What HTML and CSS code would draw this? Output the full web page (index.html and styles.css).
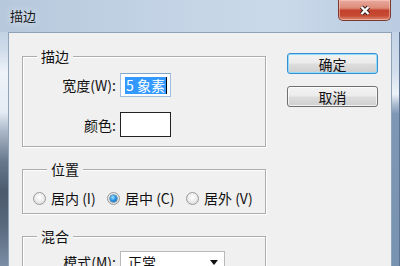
FILE: index.html
```html
<!DOCTYPE html>
<html lang="zh-CN">
<head>
<meta charset="utf-8">
<title>描边</title>
<link rel="stylesheet" href="styles.css">
</head>
<body>
<div class="win">
  <div class="titlebar">
    <span class="title">描边</span>
    <div class="close">
      <svg width="14" height="11" viewBox="0 0 14 11">
        <path d="M3.5 2 L10.5 9 M10.5 2 L3.5 9" stroke="#3b2220" stroke-width="4.4" fill="none"/>
        <path d="M3.5 2 L10.5 9 M10.5 2 L3.5 9" stroke="#ffffff" stroke-width="2.4" fill="none"/>
      </svg>
    </div>
  </div>
  <div class="body">
    <div class="frame-l"></div>
    <div class="client">
      <div class="groups">
        <fieldset class="grp g1">
          <legend>描边</legend>
          <div class="form">
            <span class="lbl">宽度(W):</span>
            <div class="input"><span class="sel">5 象素</span><i class="caret"></i></div>
            <span class="lbl">颜色:</span>
            <div class="swatch"></div>
          </div>
        </fieldset>
        <fieldset class="grp g2">
          <legend>位置</legend>
          <div class="radios">
            <span class="radio"><i class="dot"></i>居内 (I)</span>
            <span class="radio"><i class="dot on"></i>居中 (C)</span>
            <span class="radio"><i class="dot"></i>居外 (V)</span>
          </div>
        </fieldset>
        <fieldset class="grp g3">
          <legend>混合</legend>
          <div class="form form2">
            <span class="lbl">模式(M):</span>
            <div class="combo"><span>正常</span><i class="arrow"></i></div>
          </div>
        </fieldset>
      </div>
      <div class="buttons">
        <button class="btn default">确定</button>
        <button class="btn">取消</button>
      </div>
    </div>
    <div class="frame-r"></div>
  </div>
</div>
</body>
</html>
```

FILE: styles.css
```css
* { box-sizing: border-box; }
html, body { margin: 0; padding: 0; }
body {
  width: 400px;
  height: 266px;
  overflow: hidden;
  font-family: "Noto Sans CJK SC", "Noto Sans", sans-serif;
  font-size: 14px;
  color: #111;
}
.win {
  width: 400px;
  height: 266px;
  overflow: hidden;
  display: flex;
  flex-direction: column;
  background: #bfd0e3;
}
.titlebar {
  height: 32px;
  flex: none;
  display: flex;
  justify-content: space-between;
  align-items: flex-start;
  background: linear-gradient(to right, #b6c8dc 0%, #c3d3e5 40%, #cad9ea 70%, #b9cbe0 100%);
}
.title {
  padding: 8px 0 0 10px;
  font-size: 13px;
  line-height: 16px;
  color: #1a1a1a;
  text-shadow: 0 0 6px #eef4fb;
}
.close {
  width: 53px;
  height: 21px;
  margin-right: 9px;
  display: flex;
  align-items: center;
  justify-content: center;
  border: 1px solid #7a3a30;
  border-top: none;
  border-radius: 0 0 5px 5px;
  background: linear-gradient(to bottom, #e8ab9f 0%, #dd8a78 40%, #c4412d 52%, #c54a34 78%, #dd8a70 100%);
  box-shadow: inset 0 0 0 1px rgba(255, 210, 200, 0.5);
}
.close svg { display: block; }
.body {
  flex: 1;
  display: flex;
  min-height: 0;
}
.frame-l {
  width: 8px;
  flex: none;
  background: linear-gradient(to bottom, #c2d2e5 0px, #cfdcea 18px, #eef3f9 40px, #e4ecf5 80px, #a9b6c6 100px, #66778c 130px, #4c5a6d 160px, #56667b 190px, #7a8da4 234px);
}
.frame-r {
  width: 8px;
  flex: none;
  background: linear-gradient(to bottom, #c3d3e6 0px, #d2deec 40px, #eef3f9 62px, #aebfd3 72px, #7d97b5 82px, #7892b1 234px);
  border-right: 1px solid #5d7391;
}
.client {
  width: 384px;
  flex: none;
  display: flex;
  align-items: flex-start;
  background: #f0f0f0;
  border: 1px solid #8fa2b8;
  border-bottom: none;
}
.groups {
  padding-left: 13px;
  display: flex;
  flex-direction: column;
}
.grp {
  width: 244px;
  margin: 15px 0 0 0;
  padding: 0;
  border: 1px solid #acacac;
  box-shadow: 1px 1px 0 #fff, inset 1px 1px 0 #fff;
  min-width: 0;
}
.grp legend {
  margin-left: 14px;
  padding: 0 4px;
  font-size: 14px;
  line-height: 14px;
  background: #f0f0f0;
  color: #111;
}
.g1 { margin-top: 16px; padding: 10px 0 9px 0; }
.g2 { padding: 15px 0 8px 10px; }
.g3 { padding: 8px 0 20px 0; }
.form {
  display: grid;
  grid-template-columns: 93px 51px;
  column-gap: 4px;
  row-gap: 15px;
  align-items: center;
}
.form2 { grid-template-columns: 93px 105px; }
.lbl {
  text-align: right;
  line-height: 16px;
  white-space: nowrap;
}
.input {
  height: 24px;
  border: 1px solid #9ebfe0;
  border-top-color: #7fa6cc;
  background: #fff;
  display: flex;
  align-items: center;
  padding-left: 4px;
}
.sel {
  background: #3399ff;
  color: #fff;
  line-height: 17px;
  height: 17px;
  padding: 0 1px;
  white-space: nowrap;
}
.caret {
  display: block;
  width: 1px;
  height: 17px;
  background: #000;
}
.swatch {
  height: 25px;
  border: 1px solid #222;
  background: #fff;
}
.radios {
  display: grid;
  grid-template-columns: 74px 79px auto;
  align-items: center;
  height: 14px;
}
.radio {
  display: flex;
  align-items: center;
  line-height: 14px;
  white-space: nowrap;
}
.dot {
  width: 13px;
  height: 13px;
  flex: none;
  margin-right: 5px;
  border-radius: 50%;
  border: 1px solid #9a9a9a;
  background: radial-gradient(circle at 50% 40%, #ffffff 0%, #eeeeee 45%, #cfcfcf 100%);
  display: flex;
  align-items: center;
  justify-content: center;
}
.dot.on::after {
  content: "";
  width: 7px;
  height: 7px;
  border-radius: 50%;
  background: radial-gradient(circle at 40% 35%, #a9e4ff 0%, #2b97e6 45%, #0c5fa8 100%);
  box-shadow: 0 0 0 0.5px #1b4f80;
}
.combo {
  height: 22px;
  border: 1px solid #b9b9b9;
  background: #fff;
  display: flex;
  align-items: center;
  justify-content: space-between;
  padding: 0 6px 0 7px;
  line-height: 16px;
}
.arrow {
  width: 0;
  height: 0;
  border-left: 4px solid transparent;
  border-right: 4px solid transparent;
  border-top: 5px solid #111;
}
.buttons {
  margin-left: 21px;
  padding-top: 20px;
  display: flex;
  flex-direction: column;
  gap: 12px;
}
.btn {
  width: 91px;
  height: 21px;
  padding: 0;
  font-family: "Noto Sans CJK SC", "Noto Sans", sans-serif;
  font-size: 14px;
  line-height: 16px;
  color: #111;
  border: 1px solid #707070;
  border-radius: 3px;
  background: linear-gradient(to bottom, #f3f3f3 0%, #ebebeb 48%, #dddddd 52%, #cfcfcf 100%);
  box-shadow: inset 0 0 0 1px rgba(255, 255, 255, 0.7);
}
.btn.default {
  border-color: #3a8fd0;
  box-shadow: inset 0 0 0 1px #8fdcfb;
}
```
